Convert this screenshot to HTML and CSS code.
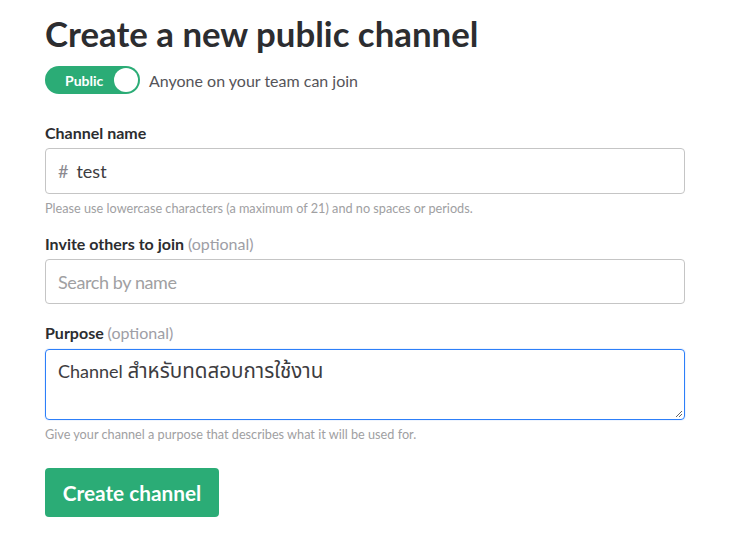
FILE: index.html
```html
<!DOCTYPE html>
<html>
<head>
<meta charset="utf-8">
<link rel="stylesheet" href="styles.css">
</head>
<body>
<div class="page">
  <h1 class="title">Create a new public channel</h1>
  <div class="toggle-row">
    <div class="toggle"><span class="toggle-label">Public</span><span class="knob"></span></div>
    <span class="toggle-desc">Anyone on your team can join</span>
  </div>

  <div class="field field-first">
    <label class="label">Channel name</label>
    <div class="input input-name"><span class="hash">#</span><span class="value">test</span></div>
    <p class="hint">Please use lowercase characters (a maximum of 21) and no spaces or periods.</p>
  </div>

  <div class="field field-invite">
    <label class="label">Invite others to join <span class="opt">(optional)</span></label>
    <div class="input input-search"><span class="placeholder">Search by name</span></div>
  </div>

  <div class="field field-purpose">
    <label class="label label-purpose">Purpose <span class="opt">(optional)</span></label>
    <div class="textarea"><span class="value">Channel <span class="thai">สำหรับทดสอบการใช้งาน</span></span>
      <svg class="grip" width="9" height="9" viewBox="0 0 9 9"><path d="M8 2 L2 8 M8 5 L5 8" stroke="#666" stroke-width="1"/></svg>
    </div>
    <p class="hint">Give your channel a purpose that describes what it will be used for.</p>
  </div>

  <button class="btn">Create channel</button>
</div>
</body>
</html>
```
FILE: styles.css
```css
* { box-sizing: border-box; }
body {
  margin: 0;
  background: #fff;
  font-family: Lato, "Noto Sans", "Noto Sans Thai", sans-serif;
  color: #2c2d30;
}
.page {
  padding: 12px 45px 0 45px;
  width: 730px;
}
.title {
  margin: 0;
  font-size: 34.8px;
  font-weight: 700;
  line-height: 44px;
  color: #2c2d30;
}
.toggle-row {
  display: flex;
  align-items: center;
  margin-top: 10px;
  height: 28px;
}
.toggle {
  width: 95px;
  height: 28px;
  border-radius: 14px;
  background: #2bac76;
  display: flex;
  align-items: center;
  justify-content: space-between;
  padding: 0 2px 0 20px;
}
.toggle-label {
  color: #fff;
  font-weight: 700;
  font-size: 14px;
}
.knob {
  width: 24px;
  height: 24px;
  border-radius: 50%;
  background: #fff;
}
.toggle-desc {
  margin-left: 9px;
  font-size: 16px;
  color: #555459;
}
.field-first { margin-top: 28px; }
.field-invite { margin-top: 17px; }
.field-purpose { margin-top: 18px; }
.label {
  display: block;
  font-size: 16px;
  font-weight: 700;
  color: #2c2d30;
  line-height: 22px;
  margin-bottom: 4px;
}
.label-purpose { margin-bottom: 5px; }
.opt {
  font-weight: 400;
  color: #9e9ea6;
  font-size: 16px;
}
.input {
  width: 640px;
  border: 1px solid #c5c5c5;
  border-radius: 4px;
  display: flex;
  align-items: center;
  padding: 0 12px;
  font-size: 18px;
}
.input-name { height: 46px; }
.input-search { height: 45px; }
.hash { color: #8b898f; margin-right: 8px; font-size: 18px; }
.value { color: #3d3c40; }
.thai { font-size: 20.6px; }
.placeholder { color: #a0a0a2; letter-spacing: -0.4px; }
.hint {
  margin: 6px 0 0;
  font-size: 12.7px;
  color: #a0a0a2;
  line-height: 16px;
}
.textarea {
  position: relative;
  width: 640px;
  height: 71px;
  border: 1px solid #2d7ff9;
  border-radius: 4px;
  padding: 8px 12px;
  font-size: 18px;
  line-height: 24px;
  box-shadow: 0 0 0 1px rgba(45,127,249,0.08);
}
.grip {
  position: absolute;
  right: 1px;
  bottom: 1px;
}
.btn {
  margin-top: 26px;
  width: 174px;
  height: 49px;
  border: 0;
  border-radius: 4px;
  background: #2bac76;
  color: #fff;
  font-family: Lato, sans-serif;
  font-weight: 700;
  font-size: 20.8px;
  padding: 0;
}
```
